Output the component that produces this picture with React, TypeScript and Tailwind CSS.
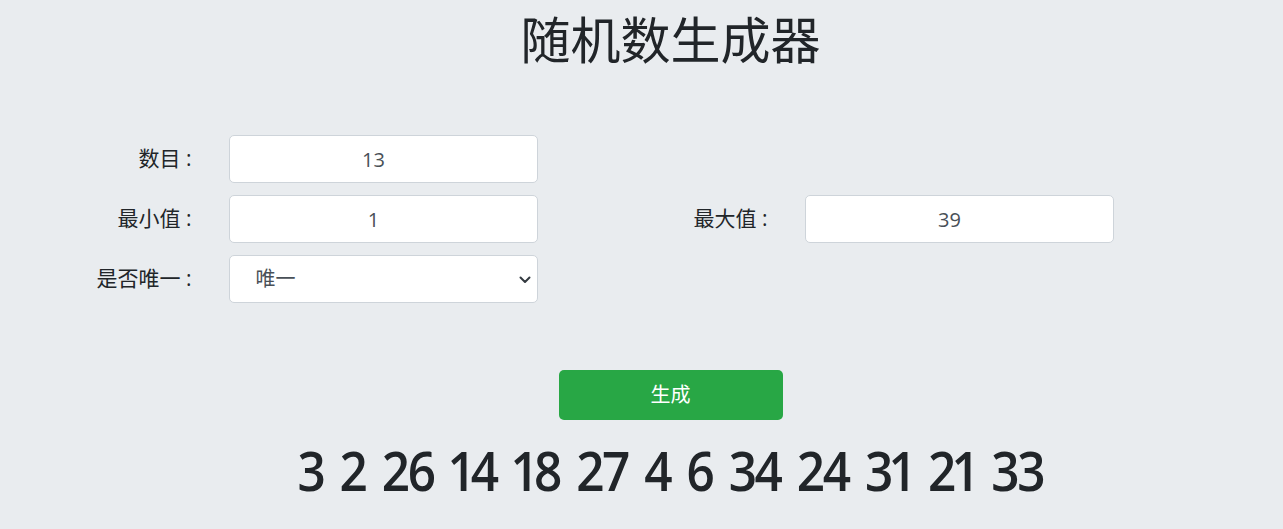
import React from "react";

const cjk = { fontFamily: '"Open Sans", "Noto Sans CJK SC", sans-serif' };

function Label({ text }: { text: string }) {
  return (
    <div className="w-[163px] shrink-0 pr-[37px] text-right text-[21px] text-[#212529]">
      {text}
    </div>
  );
}

function Field({ value }: { value: string }) {
  return (
    <input
      readOnly
      value={value}
      className="h-[48px] w-[309px] rounded-[5px] border border-[#ced4da] bg-white pl-[12px] pr-[31px] text-center text-[20px] text-[#495057] outline-none"
      style={cjk}
    />
  );
}

export default function App() {
  const nums = "3 2 26 14 18 27 4 6 34 24 31 21 33";
  return (
    <div className="min-h-[529px] w-full bg-[#e9ecef]" style={cjk}>
      <div className="ml-[58px] pt-[7px] text-center">
        <h1
          className="text-[50px] font-normal leading-[60px] text-[#212529]"
          style={{ fontFamily: '"Noto Sans CJK SC", sans-serif' }}
        >
          随机数生成器
        </h1>
      </div>

      <div className="mx-auto mt-[68px] flex w-[1152px] flex-col gap-[12px]">
        <div className="flex">
          <div className="flex w-[576px] items-center">
            <Label text="数目 :" />
            <Field value="13" />
          </div>
        </div>
        <div className="flex">
          <div className="flex w-[576px] items-center">
            <Label text="最小值 :" />
            <Field value="1" />
          </div>
          <div className="flex w-[576px] items-center">
            <Label text="最大值 :" />
            <Field value="39" />
          </div>
        </div>
        <div className="flex">
          <div className="flex w-[576px] items-center">
            <Label text="是否唯一 :" />
            <div className="relative h-[48px] w-[309px]">
              <select
                defaultValue="唯一"
                className="h-full w-full appearance-none rounded-[5px] border border-[#ced4da] bg-white pl-[26px] text-[20px] text-[#495057] outline-none"
                style={cjk}
              >
                <option>唯一</option>
                <option>不唯一</option>
              </select>
              <svg
                className="pointer-events-none absolute right-[7px] top-[21px]"
                width="12"
                height="8"
                viewBox="0 0 12 8"
              >
                <path
                  d="M1.5 1.5L6 6l4.5-4.5"
                  fill="none"
                  stroke="#343a40"
                  strokeWidth="2"
                  strokeLinecap="round"
                  strokeLinejoin="round"
                />
              </svg>
            </div>
          </div>
        </div>
      </div>

      <div className="ml-[58px] mt-[67px] flex flex-col items-center">
        <button className="h-[50px] w-[224px] rounded-[5px] bg-[#28a745] text-[20px] text-white" style={cjk}>
          生成
        </button>
        <div
          className="mt-[17px] scale-x-90 whitespace-nowrap text-[55px] font-semibold leading-[1.2] tracking-[-2.6px] text-[#212529]"
          style={{ fontFamily: '"Open Sans", sans-serif', wordSpacing: "6.3px" }}
        >
          {nums.split("").map((ch, i) =>
            ch === "1" ? (
              <span key={i} className="-mx-[2.8px]">
                1
              </span>
            ) : (
              <React.Fragment key={i}>{ch}</React.Fragment>
            )
          )}
        </div>
      </div>
    </div>
  );
}
